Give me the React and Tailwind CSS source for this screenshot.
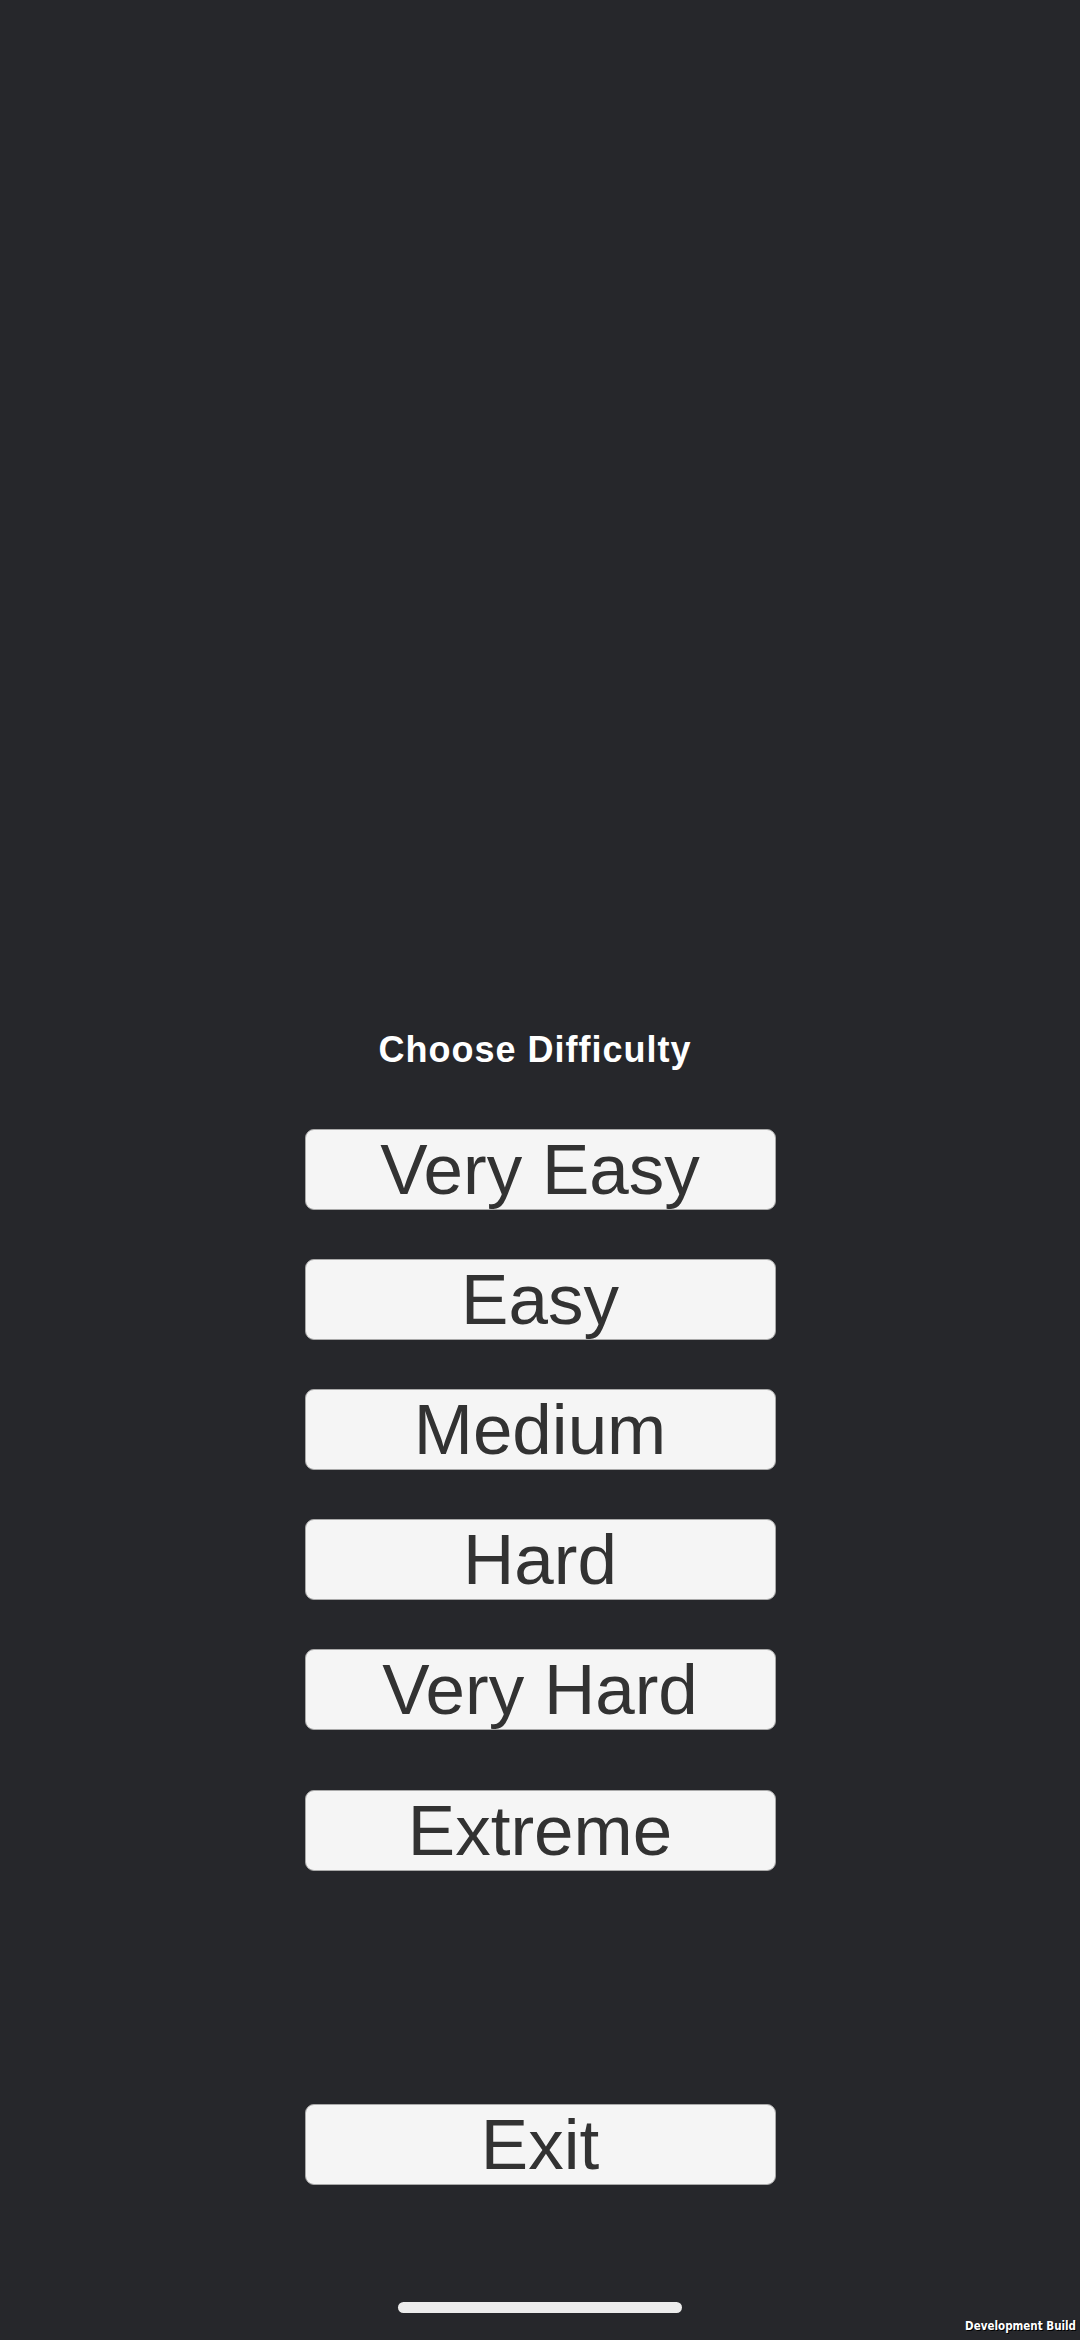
import React from "react";

const levels = ["Very Easy", "Easy", "Medium", "Hard", "Very Hard"];

function Btn({ label, className = "" }) {
  return (
    <div
      className={
        "w-[471px] h-[81px] flex items-center justify-center rounded-[9px] bg-[#f5f5f5] border border-[#a9a9a9] text-[#323232] text-[71px] leading-[71px] " +
        className
      }
      style={{ fontFamily: '"Liberation Sans", Arial, sans-serif' }}
    >
      {label}
    </div>
  );
}

export default function App() {
  return (
    <div className="relative w-[1080px] h-[2340px] bg-[#26272b] flex flex-col items-center pt-[1032px] overflow-hidden">
      <div
        className="text-white font-bold text-[36px] leading-[36px] tracking-[1px] -ml-[10px]"
        style={{ fontFamily: '"Liberation Sans", Arial, sans-serif' }}
      >
        Choose Difficulty
      </div>
      <div className="mt-[61px] flex flex-col gap-[49px]">
        {levels.map((l) => (
          <Btn key={l} label={l} />
        ))}
      </div>
      <Btn label="Extreme" className="mt-[60px]" />
      <Btn label="Exit" className="mt-[233px]" />
      <div className="mt-[117px] w-[284px] h-[11px] rounded-full bg-[#ececec]" />
      <div
        className="absolute right-[4px] bottom-[8px] text-white font-bold text-[11.5px] leading-[12px] [text-shadow:1px_1px_0_#000]"
        style={{ fontFamily: '"DejaVu Sans Condensed", "DejaVu Sans", sans-serif' }}
      >
        Development Build
      </div>
    </div>
  );
}
